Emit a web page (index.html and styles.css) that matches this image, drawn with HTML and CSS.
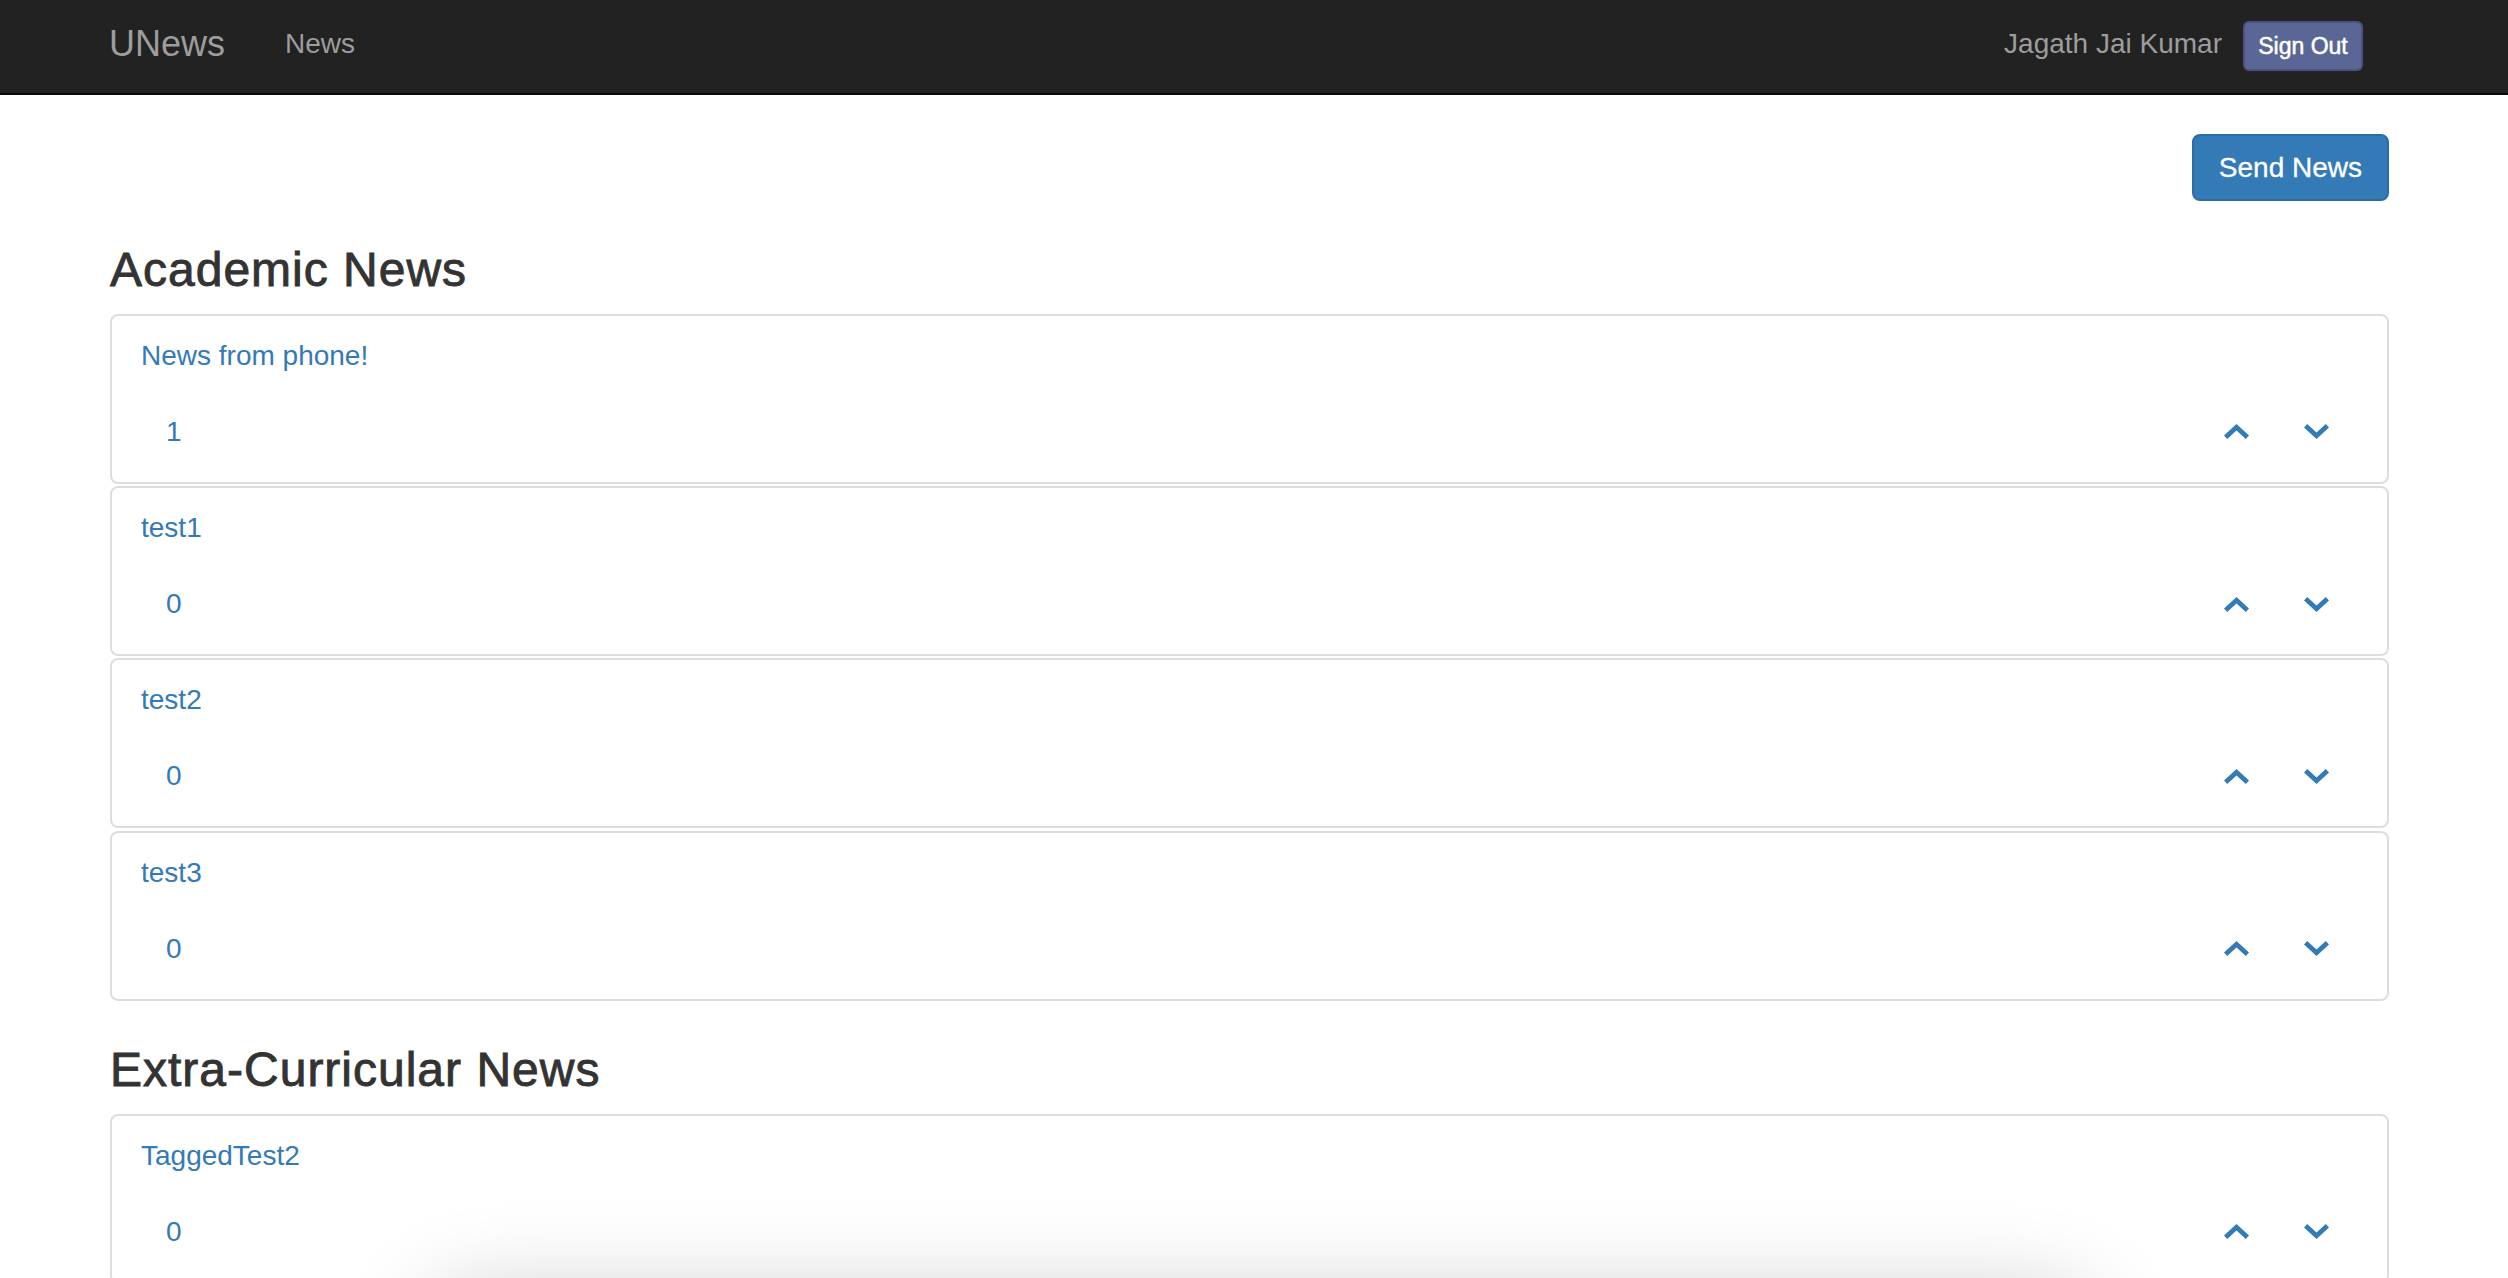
FILE: index.html
```html
<!DOCTYPE html>
<html lang="en">
<head>
<meta charset="utf-8">
<title>UNews</title>
<link rel="stylesheet" href="styles.css">
</head>
<body>
<nav class="navbar">
  <div class="navbar-inner">
    <a class="brand" href="#">UNews</a>
    <a class="nav-link" href="#">News</a>
    <div class="nav-right">
      <span class="user-name">Jagath Jai Kumar</span>
      <button class="btn-signout" type="button">Sign Out</button>
    </div>
  </div>
</nav>

<main class="container">
  <div class="toolbar">
    <button class="btn-primary" type="button">Send News</button>
  </div>

  <section class="news-section">
    <h3 class="section-title">Academic News</h3>
    <div class="news-card">
      <a class="news-title" href="#">News from phone!</a>
      <div class="news-row">
        <span class="score">1</span>
        <div class="votes">
          <svg class="chev" viewBox="0 0 25 15" width="25" height="15"><polygon points="12.5,0 25,11.6 21.8,15 12.5,6.4 3.2,15 0,11.6"/></svg>
          <svg class="chev" viewBox="0 0 25 15" width="25" height="15"><polygon points="12.5,15 25,3.4 21.8,0 12.5,8.6 3.2,0 0,3.4"/></svg>
        </div>
      </div>
    </div>
    <div class="news-card">
      <a class="news-title" href="#">test1</a>
      <div class="news-row">
        <span class="score">0</span>
        <div class="votes">
          <svg class="chev" viewBox="0 0 25 15" width="25" height="15"><polygon points="12.5,0 25,11.6 21.8,15 12.5,6.4 3.2,15 0,11.6"/></svg>
          <svg class="chev" viewBox="0 0 25 15" width="25" height="15"><polygon points="12.5,15 25,3.4 21.8,0 12.5,8.6 3.2,0 0,3.4"/></svg>
        </div>
      </div>
    </div>
    <div class="news-card">
      <a class="news-title" href="#">test2</a>
      <div class="news-row">
        <span class="score">0</span>
        <div class="votes">
          <svg class="chev" viewBox="0 0 25 15" width="25" height="15"><polygon points="12.5,0 25,11.6 21.8,15 12.5,6.4 3.2,15 0,11.6"/></svg>
          <svg class="chev" viewBox="0 0 25 15" width="25" height="15"><polygon points="12.5,15 25,3.4 21.8,0 12.5,8.6 3.2,0 0,3.4"/></svg>
        </div>
      </div>
    </div>
    <div class="news-card">
      <a class="news-title" href="#">test3</a>
      <div class="news-row">
        <span class="score">0</span>
        <div class="votes">
          <svg class="chev" viewBox="0 0 25 15" width="25" height="15"><polygon points="12.5,0 25,11.6 21.8,15 12.5,6.4 3.2,15 0,11.6"/></svg>
          <svg class="chev" viewBox="0 0 25 15" width="25" height="15"><polygon points="12.5,15 25,3.4 21.8,0 12.5,8.6 3.2,0 0,3.4"/></svg>
        </div>
      </div>
    </div>
  </section>

  <section class="news-section">
    <h3 class="section-title">Extra-Curricular News</h3>
    <div class="news-card">
      <a class="news-title" href="#">TaggedTest2</a>
      <div class="news-row">
        <span class="score">0</span>
        <div class="votes">
          <svg class="chev" viewBox="0 0 25 15" width="25" height="15"><polygon points="12.5,0 25,11.6 21.8,15 12.5,6.4 3.2,15 0,11.6"/></svg>
          <svg class="chev" viewBox="0 0 25 15" width="25" height="15"><polygon points="12.5,15 25,3.4 21.8,0 12.5,8.6 3.2,0 0,3.4"/></svg>
        </div>
      </div>
    </div>
  </section>
</main>

<div class="bottom-shadow"></div>
</body>
</html>
```

FILE: styles.css
```css
html, body {
  margin: 0;
  padding: 0;
  background: #fff;
}

body {
  font-family: "Liberation Sans", Arial, Helvetica, sans-serif;
  font-size: 28px;
  line-height: 40px;
  color: #333;
}

a {
  text-decoration: none;
}

/* Navbar */
.navbar {
  background: #222;
  border-bottom: 2px solid #080808;
  height: 93px;
}

.navbar-inner {
  height: 100%;
  box-sizing: border-box;
  display: flex;
  align-items: center;
  padding: 0 145px 6px 109px;
}

.brand {
  font-size: 36px;
  color: #9d9d9d;
  margin-right: 60px;
  line-height: 40px;
}

.nav-link {
  font-size: 28px;
  color: #9d9d9d;
}

.nav-right {
  margin-left: auto;
  display: flex;
  align-items: center;
  gap: 21px;
}

.user-name {
  color: #9d9d9d;
  font-size: 28px;
}

.btn-signout {
  font-family: inherit;
  font-size: 23px;
  font-weight: normal;
  -webkit-text-stroke: 0.5px #fff;
  line-height: 28px;
  white-space: nowrap;
  color: #fff;
  background: #5a6796;
  border: 2px solid #48547f;
  border-radius: 6px;
  padding: 0;
  margin-top: 4px;
  width: 120px;
  height: 50px;
  box-sizing: border-box;
}

/* Main */
.container {
  padding: 0 119px 0 110px;
}

.toolbar {
  display: flex;
  justify-content: flex-end;
  margin-top: 39px;
  margin-bottom: 3px;
}

.btn-primary {
  font-family: inherit;
  font-size: 28px;
  line-height: 41px;
  -webkit-text-stroke: 0.3px #fff;
  color: #fff;
  background: #337ab7;
  border: 2px solid #2e6da4;
  border-radius: 8px;
  padding: 11px 25px;
}

.section-title {
  font-size: 48px;
  line-height: 52.8px;
  font-weight: normal;
  letter-spacing: 1px;
  -webkit-text-stroke: 0.9px #333;
  margin: 43px 0 17px;
  color: #333;
}

.news-card {
  box-sizing: border-box;
  height: 170px;
  margin-bottom: 2.33px;
  border: 2px solid #ddd;
  border-radius: 8px;
  padding: 20px 58px 0 29px;
}

.news-title {
  display: block;
  color: #337ab7;
  line-height: 40px;
}

.news-row {
  display: flex;
  align-items: center;
  margin-top: 36px;
  height: 40px;
}

.score {
  color: #337ab7;
  padding-left: 25px;
}

.votes {
  margin-left: auto;
  display: flex;
  gap: 55px;
  margin-top: 0;
}

.chev {
  display: block;
  fill: #337ab7;
}

.bottom-shadow {
  position: fixed;
  left: 420px;
  top: 1292px;
  width: 1680px;
  height: 200px;
  border-radius: 60px;
  background: #fff;
  box-shadow: 0 0 90px rgba(0, 0, 0, 0.2);
}
```
